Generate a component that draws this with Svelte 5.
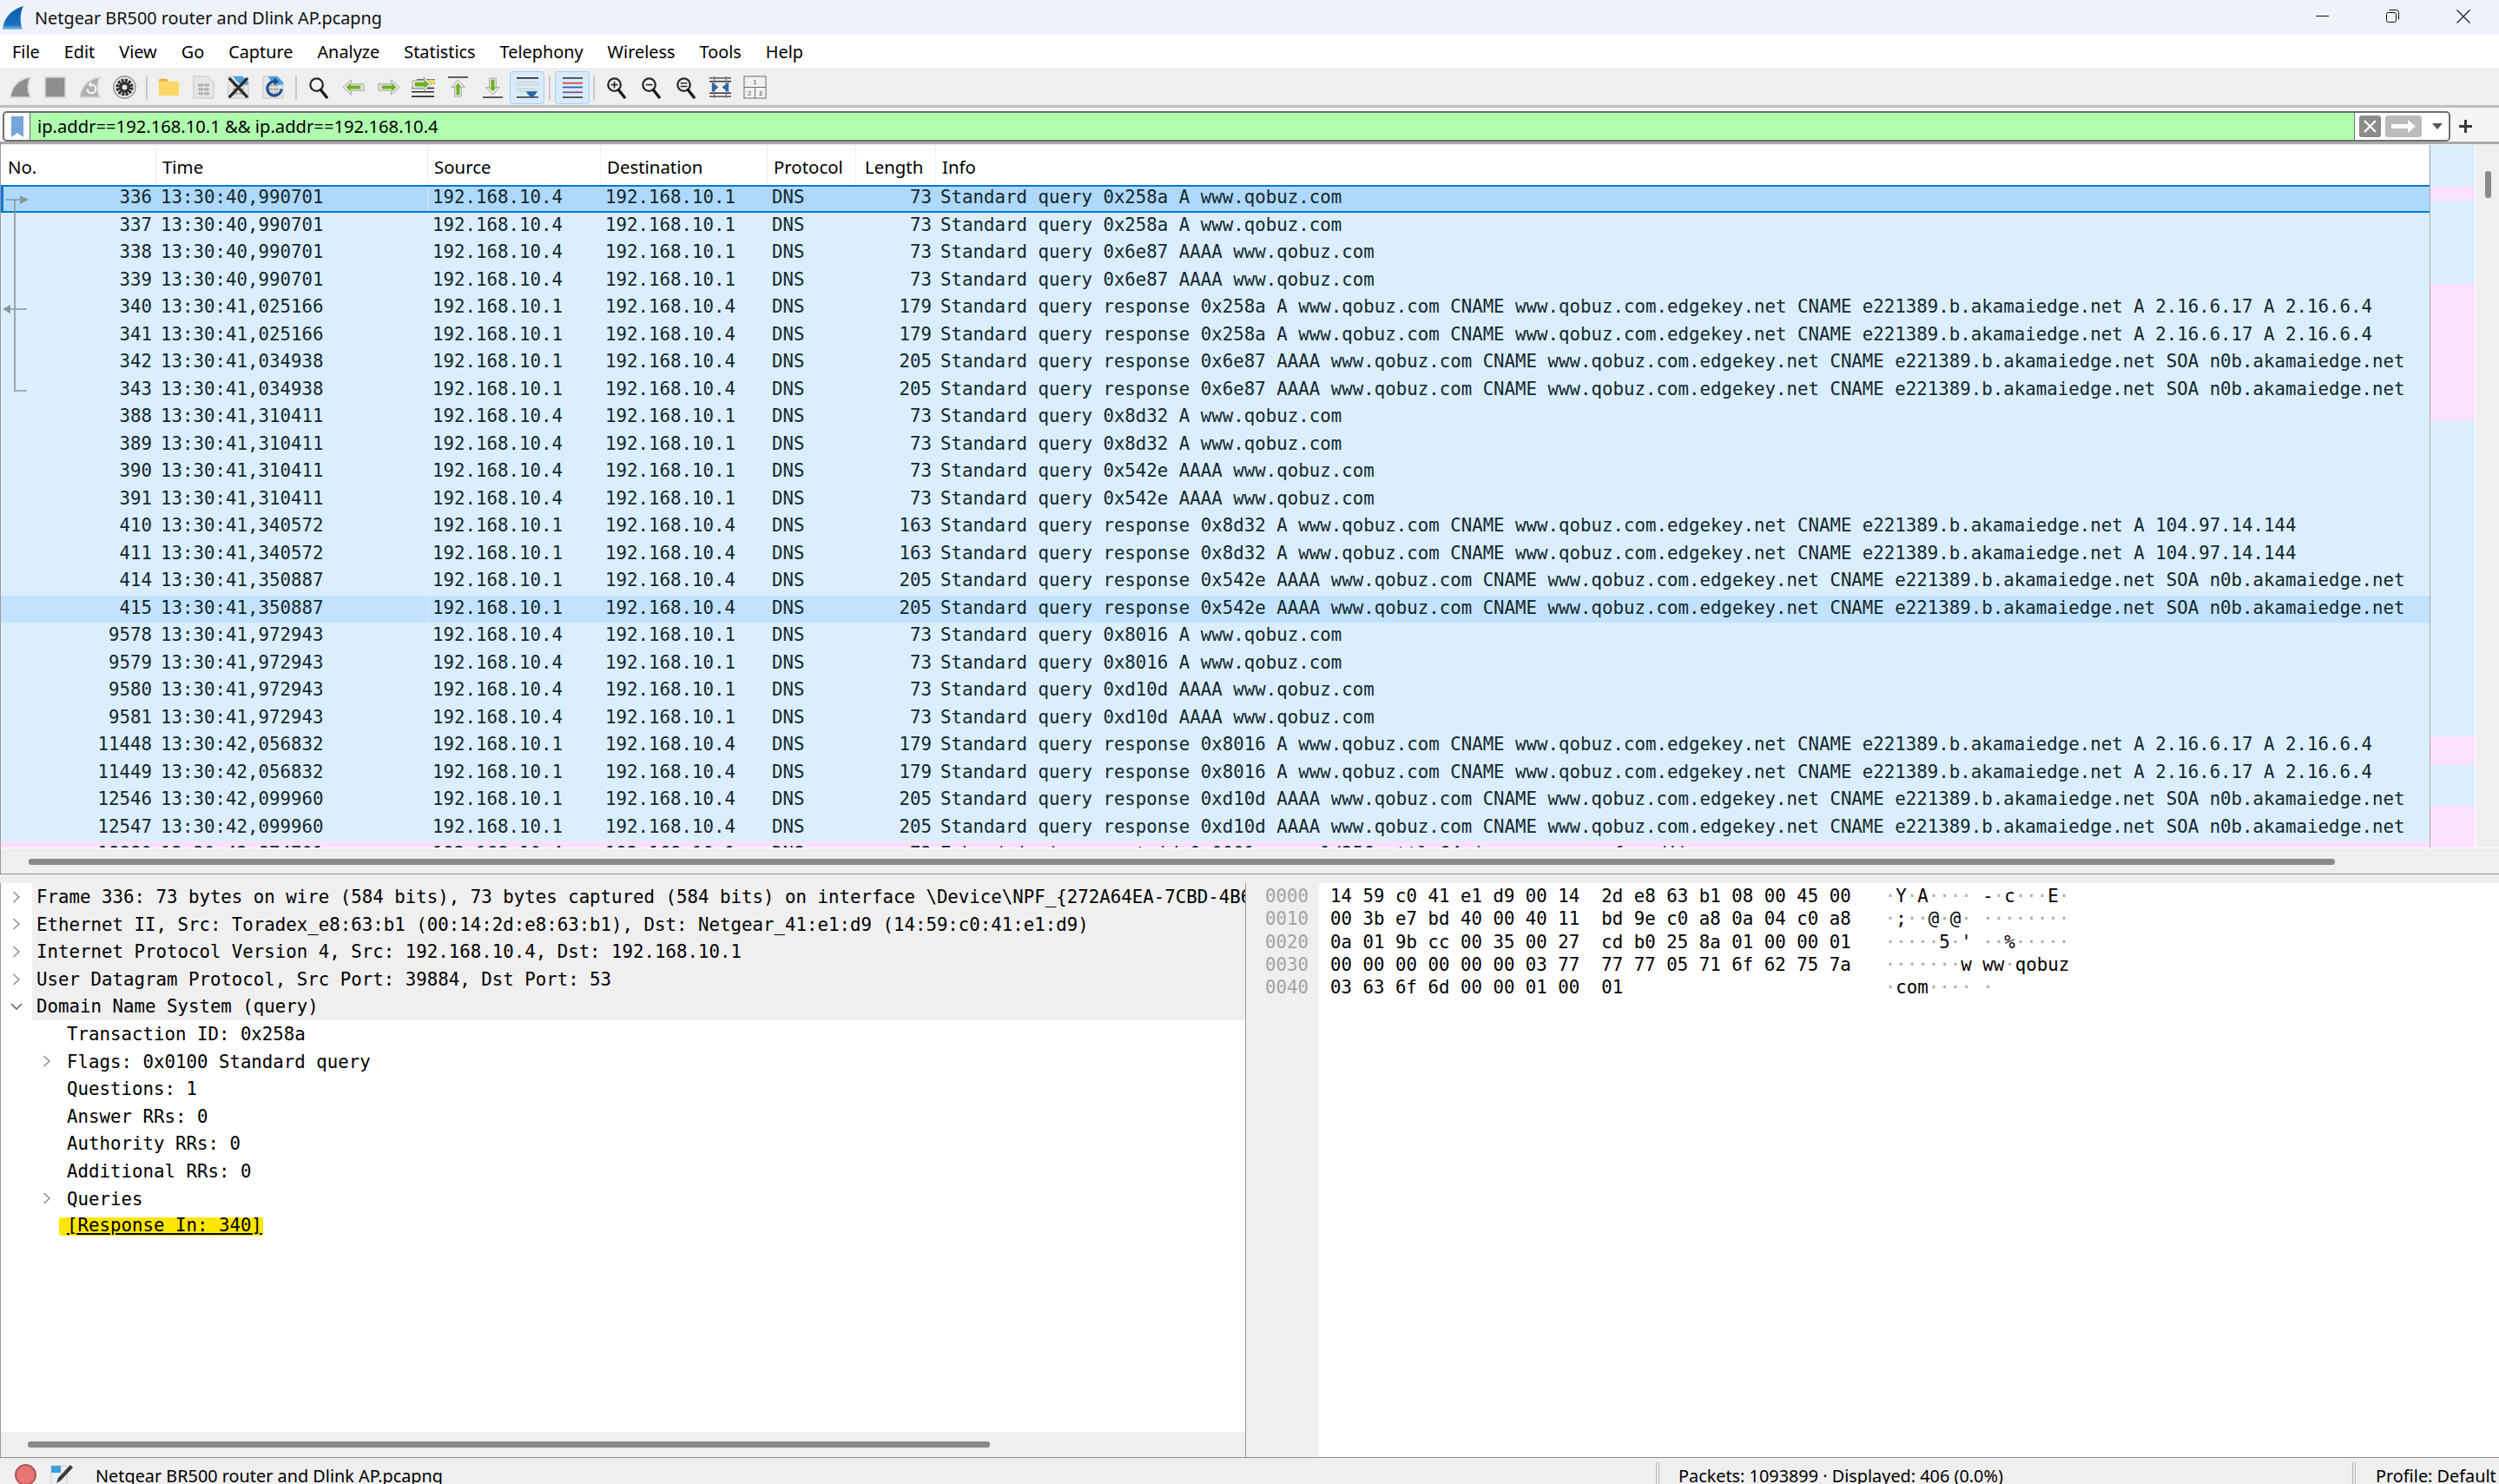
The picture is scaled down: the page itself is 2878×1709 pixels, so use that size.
<script lang="ts">
  const menus = ['File', 'Edit', 'View', 'Go', 'Capture', 'Analyze', 'Statistics', 'Telephony', 'Wireless', 'Tools', 'Help'];
  const columns = ['No.', 'Time', 'Source', 'Destination', 'Protocol', 'Length', 'Info'];

  const C = 'www.qobuz.com CNAME www.qobuz.com.edgekey.net CNAME e221389.b.akamaiedge.net';
  const query = (id: string, type: string) => `Standard query ${id} ${type} www.qobuz.com`;
  const resp = (id: string, type: string, tail: string) => `Standard query response ${id} ${type} ${C} ${tail}`;
  const A4 = 'A 2.16.6.17 A 2.16.6.4';
  const SOA = 'SOA n0b.akamaiedge.net';

  // no, time, sens (true = .4 -> .1), longueur, info
  const raw: [number, string, boolean, number, string][] = [
    [336, '40,990701', true, 73, query('0x258a', 'A')],
    [337, '40,990701', true, 73, query('0x258a', 'A')],
    [338, '40,990701', true, 73, query('0x6e87', 'AAAA')],
    [339, '40,990701', true, 73, query('0x6e87', 'AAAA')],
    [340, '41,025166', false, 179, resp('0x258a', 'A', A4)],
    [341, '41,025166', false, 179, resp('0x258a', 'A', A4)],
    [342, '41,034938', false, 205, resp('0x6e87', 'AAAA', SOA)],
    [343, '41,034938', false, 205, resp('0x6e87', 'AAAA', SOA)],
    [388, '41,310411', true, 73, query('0x8d32', 'A')],
    [389, '41,310411', true, 73, query('0x8d32', 'A')],
    [390, '41,310411', true, 73, query('0x542e', 'AAAA')],
    [391, '41,310411', true, 73, query('0x542e', 'AAAA')],
    [410, '41,340572', false, 163, resp('0x8d32', 'A', 'A 104.97.14.144')],
    [411, '41,340572', false, 163, resp('0x8d32', 'A', 'A 104.97.14.144')],
    [414, '41,350887', false, 205, resp('0x542e', 'AAAA', SOA)],
    [415, '41,350887', false, 205, resp('0x542e', 'AAAA', SOA)],
    [9578, '41,972943', true, 73, query('0x8016', 'A')],
    [9579, '41,972943', true, 73, query('0x8016', 'A')],
    [9580, '41,972943', true, 73, query('0xd10d', 'AAAA')],
    [9581, '41,972943', true, 73, query('0xd10d', 'AAAA')],
    [11448, '42,056832', false, 179, resp('0x8016', 'A', A4)],
    [11449, '42,056832', false, 179, resp('0x8016', 'A', A4)],
    [12546, '42,099960', false, 205, resp('0xd10d', 'AAAA', SOA)],
    [12547, '42,099960', false, 205, resp('0xd10d', 'AAAA', SOA)],
    [18880, '42,874701', true, 73, 'Echo (ping) request id=0x0001, seq=1/256, ttl=64 (no response found!)']
  ];

  const packets = raw.map(([no, time, out, len, info]) => ({
    no,
    time: `13:30:${time}`,
    src: out ? '192.168.10.4' : '192.168.10.1',
    dst: out ? '192.168.10.1' : '192.168.10.4',
    len,
    info
  }));

  // zones roses de la minimap (px depuis le haut de la liste)
  const minimapMarks = [
    { top: 48, height: 16 },
    { top: 160, height: 158 },
    { top: 681, height: 33 },
    { top: 761, height: 48 }
  ];

  const tree = [
    { text: 'Frame 336: 73 bytes on wire (584 bits), 73 bytes captured (584 bits) on interface \\Device\\NPF_{272A64EA-7CBD-4B6', level: 0, twisty: 'closed' },
    { text: 'Ethernet II, Src: Toradex_e8:63:b1 (00:14:2d:e8:63:b1), Dst: Netgear_41:e1:d9 (14:59:c0:41:e1:d9)', level: 0, twisty: 'closed' },
    { text: 'Internet Protocol Version 4, Src: 192.168.10.4, Dst: 192.168.10.1', level: 0, twisty: 'closed' },
    { text: 'User Datagram Protocol, Src Port: 39884, Dst Port: 53', level: 0, twisty: 'closed' },
    { text: 'Domain Name System (query)', level: 0, twisty: 'open' },
    { text: 'Transaction ID: 0x258a', level: 1, twisty: '' },
    { text: 'Flags: 0x0100 Standard query', level: 1, twisty: 'closed' },
    { text: 'Questions: 1', level: 1, twisty: '' },
    { text: 'Answer RRs: 0', level: 1, twisty: '' },
    { text: 'Authority RRs: 0', level: 1, twisty: '' },
    { text: 'Additional RRs: 0', level: 1, twisty: '' },
    { text: 'Queries', level: 1, twisty: 'closed' }
  ];

  const bytes = '14 59 c0 41 e1 d9 00 14 2d e8 63 b1 08 00 45 00 00 3b e7 bd 40 00 40 11 bd 9e c0 a8 0a 04 c0 a8 0a 01 9b cc 00 35 00 27 cd b0 25 8a 01 00 00 01 00 00 00 00 00 00 03 77 77 77 05 71 6f 62 75 7a 03 63 6f 6d 00 00 01 00 01'.split(' ');

  const hexRows = [];
  for (let i = 0; i < bytes.length; i += 16) {
    const line = bytes.slice(i, i + 16);
    const left = line.slice(0, 8).join(' ');
    const right = line.slice(8).join(' ');
    const chars = line.map((b) => {
      const code = parseInt(b, 16);
      return code >= 32 && code < 127 ? String.fromCharCode(code) : '·';
    });
    hexRows.push({
      offset: i.toString(16).padStart(4, '0'),
      hex: `${left}  ${right}`.padEnd(48, ' '),
      ascii: [...chars.slice(0, 8), ' ', ...chars.slice(8)]
    });
  }
</script>

{#snippet fin(fill)}
  <path d="M2 26C3 15 11 4 26 2c-4 8-4 16 0 24z" fill={fill} stroke="#d8d8d8" stroke-width="1.5" />
{/snippet}

{#snippet filePage(corner)}
  <path d="M2 1h17l7 7v19H2z" fill="#e6e6e6" stroke="#c4c4c4" />
  {#if corner}<path d="M8 1h11l7 7v3c-8 1-14-2-18-10z" fill={corner} />{/if}
  {#each [10, 15, 20] as y}
    {#each [8, 10, 12, 15, 17, 19] as x}
      <rect x={x} y={y} width="1.2" height="3" fill="#8c8c8c" />
    {/each}
  {/each}
{/snippet}

{#snippet lens(mark)}
  <circle cx="11" cy="10" r="7.5" fill="#f2f2f2" stroke="#2a2a2a" stroke-width="2.4" />
  <path d="M16 16l7 9" stroke="#1a1a1a" stroke-width="3.4" stroke-linecap="round" />
  {#if mark === 'plus'}<path d="M7 10h8M11 6v8" stroke="#222" stroke-width="1.6" />{/if}
  {#if mark === 'minus'}<path d="M7 10h8" stroke="#222" stroke-width="1.6" />{/if}
  {#if mark === 'equal'}<path d="M7 8h8M7 12h8" stroke="#222" stroke-width="1.6" />{/if}
{/snippet}

<div class="window">
  <header class="titlebar">
    <svg class="logo" viewBox="0 0 26 26" width="27" height="27">
      <defs>
        <linearGradient id="finfill" x1="0" y1="0" x2="0" y2="1">
          <stop offset="0" stop-color="#0f5ca8" />
          <stop offset="0.8" stop-color="#1a6fc0" />
          <stop offset="1" stop-color="#8fc0ea" />
        </linearGradient>
      </defs>
      <path d="M1 26C2 14 10 4 24 0c-4 8-4 18-1 26z" fill="url(#finfill)" />
    </svg>
    <span class="title">Netgear BR500 router and Dlink AP.pcapng</span>
    <div class="winctl">
      <svg viewBox="0 0 16 16" width="16" height="16"><path d="M0 7.5h15" stroke="#111" stroke-width="1" /></svg>
      <svg viewBox="0 0 16 16" width="16" height="16"><rect x="0.5" y="3.5" width="11" height="11" rx="2" fill="none" stroke="#111" /><path d="M3.5 0.5h8a3 3 0 0 1 3 3v8" fill="none" stroke="#111" /></svg>
      <svg viewBox="0 0 16 16" width="16" height="16"><path d="M0.5 0.5l15 15M15.5 0.5l-15 15" stroke="#111" stroke-width="1.1" /></svg>
    </div>
  </header>

  <nav class="menubar">
    {#each menus as m}<span>{m}</span>{/each}
  </nav>

  <div class="toolbar">
    <button class="tool"><svg viewBox="0 0 28 28">{@render fin('#8f8f8f')}</svg></button>
    <button class="tool"><svg viewBox="0 0 28 28"><rect x="2" y="2" width="24" height="24" fill="#8f8f8f" stroke="#d8d8d8" stroke-width="1.5" /></svg></button>
    <button class="tool"><svg viewBox="0 0 28 28">{@render fin('#b0b0b0')}<path d="M11 16a5 5 0 1 0 5-5" fill="none" stroke="#f4f4f4" stroke-width="2.4" /><path d="M16 7v7l-4-3z" fill="#f4f4f4" /></svg></button>
    <button class="tool"><svg viewBox="0 0 28 28"><circle cx="14" cy="14" r="13" fill="#f2f2f2" stroke="#8a8a8a" stroke-width="1.4" /><circle cx="14" cy="14" r="8" fill="#f2f2f2" stroke="#333" stroke-width="5" stroke-dasharray="3 1.2" /><circle cx="14" cy="14" r="6.5" fill="#333" /><circle cx="14" cy="14" r="3" fill="#e8e8e8" /></svg></button>
    <i class="sep"></i>
    <button class="tool"><svg viewBox="0 0 28 28"><path d="M2 6a2 2 0 0 1 2-2h7l3 3h-12z" fill="#f0a92e" /><rect x="2" y="7" width="24" height="17" rx="1.5" fill="#fdd766" /></svg></button>
    <button class="tool"><svg viewBox="0 0 28 28">{@render filePage('')}</svg></button>
    <button class="tool"><svg viewBox="0 0 28 28">{@render filePage('#4aa3df')}<path d="M3 3l22 23M25 3L3 26" stroke="#2b2b2b" stroke-width="3.4" /></svg></button>
    <button class="tool"><svg viewBox="0 0 28 28">{@render filePage('#4aa3df')}<path d="M16 7a8.5 8.5 0 1 0 8 9" fill="none" stroke="#1d4f8f" stroke-width="3.2" /><path d="M15 2v10l6-5z" fill="#1d4f8f" /></svg></button>
    <i class="sep s2"></i>
    <button class="tool"><svg viewBox="0 0 28 28"><g transform="translate(0 1)">{@render lens('')}</g></svg></button>
    <button class="tool"><svg viewBox="0 0 28 28"><path d="M1 14l10-9v5h15v8H11v5z" fill="#dfe5dc" stroke="#a8a8a8" /><path d="M5 14l5-5v3h12v4H10v3z" fill="#6cb11e" /></svg></button>
    <button class="tool"><svg viewBox="0 0 28 28"><path d="M27 14l-10-9v5H2v8h15v5z" fill="#dfe5dc" stroke="#a8a8a8" /><path d="M23 14l-5-5v3H6v4h12v3z" fill="#6cb11e" /></svg></button>
    <button class="tool"><svg viewBox="0 0 28 28"><path d="M6 5h22M6 9h22" stroke="#2c2c2c" stroke-width="1" /><rect x="20" y="5" width="7" height="5" fill="#f8dc55" /><path d="M0 15h27M0 19.5h27M0 25h27" stroke="#2c2c2c" stroke-width="1.6" /><path d="M24 10l-9-8v4H1v9h14v3z" fill="#e4e8e0" stroke="#a8a8a8" /><path d="M21 10l-6-5v3H4v5h11v2z" fill="#6cb11e" /></svg></button>
    <button class="tool"><svg viewBox="0 0 28 28"><path d="M2 2h24" stroke="#333" stroke-width="1.6" /><path d="M14 5l8 9h-4v11h-8V14H6z" fill="#e2e8dc" stroke="#a8a8a8" /><path d="M14 9l4 5h-2v9h-4v-9h-2z" fill="#6cb11e" /></svg></button>
    <button class="tool"><svg viewBox="0 0 28 28"><path d="M2 26h24" stroke="#333" stroke-width="1.6" /><path d="M14 23l8-9h-4V3h-8v11H6z" fill="#e2e8dc" stroke="#a8a8a8" /><path d="M14 19l4-5h-2V5h-4v9h-2z" fill="#6cb11e" /></svg></button>
    <button class="tool on"><svg viewBox="0 0 28 28"><path d="M1 3h26M1 26h26" stroke="#333" stroke-width="1.6" /><path d="M1 8h26M1 11h26M1 16h26M1 19h26" stroke="#cfd2c8" stroke-width="1.4" /><path d="M12 19h14l-3 4h-1v2h-6v-2h-1z" fill="#2a64ad" /></svg></button>
    <i class="sep s3"></i>
    <button class="tool on"><svg viewBox="0 0 28 28"><path d="M2 3h24" stroke="#333" stroke-width="1.6" /><path d="M2 9h24" stroke="#e23b3b" stroke-width="1.8" /><path d="M2 14h24" stroke="#2d62b3" stroke-width="1.8" /><path d="M2 20h24" stroke="#7d4f86" stroke-width="1.8" /><path d="M2 26h24" stroke="#333" stroke-width="1.6" /></svg></button>
    <i class="sep s4"></i>
    <button class="tool"><svg viewBox="0 0 28 28"><g transform="translate(1 1)">{@render lens('plus')}</g></svg></button>
    <button class="tool"><svg viewBox="0 0 28 28"><g transform="translate(1 1)">{@render lens('minus')}</g></svg></button>
    <button class="tool"><svg viewBox="0 0 28 28"><g transform="translate(1 1)">{@render lens('equal')}</g></svg></button>
    <button class="tool"><svg viewBox="0 0 28 28"><path d="M1 3h26M1 7h26M1 21h26M1 25h26" stroke="#333" stroke-width="1.4" /><path d="M7 1v26M21 1v26" stroke="#777" stroke-width="1.4" /><path d="M4 8l8 6-8 6zM24 8l-8 6 8 6z" fill="#2a64ad" /></svg></button>
    <button class="tool"><svg viewBox="0 0 28 28"><rect x="1" y="1" width="26" height="26" fill="#f2f2f2" stroke="#666" /><path d="M1 14h26M14 14v13" stroke="#666" /><text x="14" y="10" class="pane-no">1</text><text x="7.5" y="23.5" class="pane-no">2</text><text x="20.5" y="23.5" class="pane-no">3</text></svg></button>
  </div>

  <div class="filterbar">
    <div class="filter">
      <span class="bookmark">
        <svg viewBox="0 0 14 24" width="14" height="24"><path d="M0 0h14v24l-7-5-7 5z" fill="#76a5dc" /></svg>
      </span>
      <span class="expr">ip.addr==192.168.10.1 &amp;&amp; ip.addr==192.168.10.4</span>
      <span class="filter-tail">
        <span class="fbtn clear">
          <svg viewBox="0 0 25 25" width="25" height="25"><path d="M6 6l13 13M19 6L6 19" stroke="#fff" stroke-width="2.2" /></svg>
        </span>
        <span class="fbtn apply">
          <svg viewBox="0 0 42 25" width="42" height="25"><path d="M7 10h19V5l9 7.5-9 7.5v-5H7z" fill="#fff" /></svg>
        </span>
        <span class="caret"></span>
      </span>
    </div>
    <svg class="plus" viewBox="0 0 15 15" width="15" height="15"><path d="M7.5 0v15M0 7.5h15" stroke="#3a3a3a" stroke-width="3" /></svg>
  </div>

  <section class="packet-pane">
    <div class="packet-main">
      <div class="cols head">
        {#each columns as c}<span>{c}</span>{/each}
      </div>
      <div class="rows">
        {#each packets as p, i}
          <div class="cols row" class:sel={i === 0} class:hover={p.no === 415} class:icmp={p.no === 18880}>
            <span class="num">{p.no}</span>
            <span class="time">{p.time}</span>
            <span>{p.src}</span>
            <span>{p.dst}</span>
            <span>DNS</span>
            <span class="num">{p.len}</span>
            <span>{p.info}</span>
          </div>
        {/each}
        <svg class="related" width="40" height="240">
          <path d="M5 17h18M16 17v220h14M30 143H10" fill="none" stroke="#8b969b" stroke-width="1.6" />
          <path d="M22 12l10 5-10 5zM11 138l-9 5 9 5z" fill="#8b969b" />
        </svg>
      </div>
    </div>
    <div class="minimap">
      {#each minimapMarks as m}
        <i style="top: {m.top}px; height: {m.height}px"></i>
      {/each}
    </div>
    <div class="vscroll"><i></i></div>
  </section>
  <div class="hscroll list-h"><i></i></div>

  <section class="lower">
    <div class="details">
      <div class="tree">
        {#each tree as n}
          <div class="tree-row" class:group={n.level === 0}>
            <span class="twisty" class:deep={n.level === 1}>
              {#if n.twisty === 'closed'}
                <svg viewBox="0 0 10 14" width="10" height="14"><path d="M1.5 1l6.5 6-6.5 6" fill="none" stroke="#8a8a8a" stroke-width="1.4" /></svg>
              {:else if n.twisty === 'open'}
                <svg viewBox="0 0 14 8" width="14" height="8"><path d="M1 1l6 6 6-6" fill="none" stroke="#555" stroke-width="1.4" /></svg>
              {/if}
            </span>
            <span class="node">{n.text}</span>
          </div>
        {/each}
        <div class="tree-row">
          <span class="twisty deep"></span>
          <span class="node"><mark>[Response In: 340]</mark></span>
        </div>
      </div>
      <div class="hscroll detail-h"><i></i></div>
    </div>
    <div class="bytes">
      <div class="gutter">
        {#each hexRows as r}<div class="hexline">{r.offset}</div>{/each}
      </div>
      <div class="dump">
        {#each hexRows as r}
          <div class="hexline"><span>{r.hex}</span><span class="ascii">{#each r.ascii as ch}<span class:dot={ch === '·'}>{ch}</span>{/each}</span></div>
        {/each}
      </div>
    </div>
  </section>

  <footer class="statusbar">
    <span class="status-main">
      <span class="led"></span>
      <svg class="note" viewBox="0 0 26 30" width="26" height="30">
        <path d="M1 2h18v26H1z" fill="#e8eef2" stroke="#c8ccd0" />
        <rect x="1" y="2" width="11" height="8" fill="#3aa0e0" />
        <path d="M23 1l3 3-14 15-5 3 2-6z" fill="#3a3a3a" />
      </svg>
      <span class="capture">Netgear BR500 router and Dlink AP.pcapng</span>
    </span>
    <i class="grip"></i>
    <span class="status-packets">Packets: 1093899 · Displayed: 406 (0.0%)</span>
    <i class="grip"></i>
    <span class="status-profile">Profile: Default</span>
  </footer>
</div>

<style>
  :global(body) {
    margin: 0;
    background: #efefef;
  }

  .window {
    width: 2878px;
    height: 1709px;
    display: flex;
    flex-direction: column;
    overflow: hidden;
    background: #efefef;
    color: #000;
    font-family: 'Noto Sans', sans-serif;
    font-size: 19.85px;
  }

  /* barre de titre */
  .titlebar {
    height: 40px;
    flex: none;
    display: flex;
    align-items: center;
    background: #eef3fa;
    padding-left: 2px;
  }
  .logo {
    margin-right: 11px;
  }
  .title {
    color: #111;
  }
  .winctl {
    margin-left: auto;
    display: flex;
    gap: 65px;
    padding-right: 33px;
    padding-bottom: 2px;
  }

  .menubar {
    height: 38px;
    flex: none;
    display: flex;
    align-items: center;
    gap: 28px;
    padding-left: 14px;
    background: #fff;
  }

  .toolbar {
    height: 41px;
    flex: none;
    display: flex;
    align-items: center;
    padding: 2px 0 0 3px;
    border-bottom: 3px solid #bfbfbf;
    background: #efefef;
  }
  .tool {
    width: 40px;
    height: 38px;
    padding: 0;
    border: 1px solid transparent;
    border-radius: 4px;
    background: none;
    display: flex;
    align-items: center;
    justify-content: center;
    box-sizing: border-box;
  }
  .tool svg {
    width: 27px;
    height: 27px;
  }
  .tool.on {
    background: #d9ebfb;
    border-color: #9fd0f7;
  }
  .sep {
    width: 11px;
    height: 28px;
    flex: none;
    background: linear-gradient(#c9c9c9, #c9c9c9) center / 2px 100% no-repeat;
  }
  .sep.s2 {
    width: 13px;
  }
  .sep.s3 {
    width: 12px;
  }
  .sep.s4 {
    width: 10px;
  }
  .pane-no {
    font-size: 7px;
    fill: #333;
    text-anchor: middle;
  }

  /* filtre d'affichage */
  .filterbar {
    height: 39px;
    flex: none;
    display: flex;
    align-items: flex-start;
    padding: 4px 0 0 3px;
    box-sizing: border-box;
    background: #f5f5f5;
  }
  .filter {
    width: 2819px;
    height: 35px;
    box-sizing: border-box;
    display: flex;
    border: 2px solid #6f6f6f;
    border-radius: 5px;
    overflow: hidden;
    background: #fff;
  }
  .bookmark {
    width: 30px;
    flex: none;
    display: flex;
    align-items: center;
    justify-content: center;
    border-right: 1px solid #6f6f6f;
    box-sizing: border-box;
  }
  .expr {
    flex: 1;
    background: #afffaf;
    padding-left: 8px;
    line-height: 31px;
    font-size: 20.2px;
  }
  .filter-tail {
    width: 109px;
    flex: none;
    display: flex;
    align-items: center;
    gap: 5px;
    padding-left: 5px;
    box-sizing: border-box;
    border-left: 1px solid #6f6f6f;
  }
  .fbtn {
    height: 25px;
    display: flex;
    border-radius: 3px;
  }
  .clear {
    background: #8b8d89;
  }
  .apply {
    background: #bbb;
  }
  .caret {
    width: 0;
    height: 0;
    margin-left: 7px;
    border: 6px solid transparent;
    border-top: 7px solid #555;
    border-bottom: 0;
  }
  .plus {
    margin: 10px 0 0 10px;
  }

  /* liste des paquets */
  .packet-pane {
    height: 813px;
    flex: none;
    display: flex;
    box-sizing: border-box;
    border-top: 3px solid #a9a9a9;
    border-left: 1px solid #9a9a9a;
    padding-top: 1px;
    background: #efefef;
  }
  .packet-main {
    width: 2797px;
    flex: none;
    display: flex;
    flex-direction: column;
    background: #fff;
    border-right: 1px solid #a8a8a8;
  }
  .cols {
    display: grid;
    grid-template-columns: 179px 313px 199px 192px 102px 92px 1fr;
    white-space: pre;
  }
  .head {
    height: 46px;
    flex: none;
    align-items: stretch;
    background: #fff;
    font-size: 20.4px;
  }
  .head span {
    padding-left: 7px;
    line-height: 50px;
    border-right: 1px solid #ececec;
  }
  .head span:first-child {
    padding-left: 8px;
  }
  .head span:nth-child(6) {
    padding-left: 10px;
  }
  .rows {
    position: relative;
    flex: 1;
    overflow: hidden;
    font-family: 'DejaVu Sans Mono', monospace;
    font-size: 20.76px;
    color: #12272e;
    background: #daeeff;
  }
  .row {
    height: 31.5px;
    line-height: 29px;
    box-sizing: border-box;
  }
  .row span {
    padding-left: 5px;
    overflow: hidden;
  }
  .row .num {
    padding: 0 5px 0 0;
    text-align: right;
  }
  .row.sel {
    background: #aed8fc;
    border-top: 2px solid #0078d7;
    border-bottom: 2px solid #0078d7;
    line-height: 25px;
    box-shadow: inset 3px 0 0 #0078d7;
  }
  .row.hover {
    background: #c2e2ff;
  }
  .row.sel .time,
  .row.hover .time {
    border-right: 1px solid #d6ebfd;
  }
  .row.icmp {
    background: #fce0ff;
  }
  .related {
    position: absolute;
    left: 0;
    top: 0;
  }

  .minimap {
    position: relative;
    width: 51px;
    flex: none;
    background: #daeeff;
    border-right: 1px solid #fff;
  }
  .minimap i {
    position: absolute;
    left: 0;
    right: 0;
    background: #fce0ff;
  }
  .vscroll {
    flex: 1;
    background: #efefef;
    padding: 30px 0 0 11px;
  }
  .vscroll i {
    display: block;
    width: 7px;
    height: 31px;
    border-radius: 3px;
    background: #8a8a8a;
  }

  .hscroll {
    flex: none;
    box-sizing: border-box;
    background: #efefef;
  }
  .hscroll i {
    display: block;
    height: 7px;
    border-radius: 3px;
    background: #8a8a8a;
  }
  .list-h {
    height: 31px;
    padding: 12px 0 0 32px;
    border-bottom: 1px solid #8d8d8d;
    border-left: 1px solid #9a9a9a;
    border-top: 1px solid #fff;
  }
  .list-h i {
    width: 2656px;
  }

  /* volets du bas */
  .lower {
    height: 661px;
    flex: none;
    margin-top: 10px;
    display: flex;
    border-bottom: 1px solid #8a8a9a;
  }
  .details {
    width: 1435px;
    flex: none;
    display: flex;
    flex-direction: column;
    box-sizing: border-box;
    border-left: 1px solid #9a9a9a;
    border-right: 1px solid #9a9a9a;
    background: #fff;
  }
  .tree {
    flex: 1;
    overflow: hidden;
    font-family: 'DejaVu Sans Mono', monospace;
    font-size: 20.76px;
  }
  .tree-row {
    height: 31.6px;
    line-height: 33px;
    display: flex;
    white-space: pre;
  }
  .twisty {
    width: 36px;
    flex: none;
    display: flex;
    align-items: center;
    justify-content: center;
  }
  .twisty.deep {
    margin-left: 35px;
  }
  .node {
    flex: 1;
    overflow: hidden;
    padding-left: 5px;
  }
  .group .node {
    background: #efefef;
  }
  mark {
    display: inline-block;
    background: #ffe600;
    height: 21px;
    line-height: 19px;
    margin-left: -9px;
    padding: 0 1px 0 9px;
    border-radius: 2px;
    margin-top: 6px;
    vertical-align: top;
    text-decoration: underline;
    color: #000;
  }
  .node:has(mark) {
    overflow: visible;
  }
  .detail-h {
    height: 29px;
    padding: 11px 0 0 31px;
  }
  .detail-h i {
    width: 1108px;
  }

  .bytes {
    flex: 1;
    margin-left: 9px;
    display: flex;
    background: #fff;
    font-family: 'DejaVu Sans Mono', monospace;
    font-size: 20.76px;
  }
  .gutter {
    width: 75px;
    flex: none;
    box-sizing: border-box;
    padding: 2px 0 0 13px;
    background: #efefef;
    color: #a3a3a3;
  }
  .dump {
    padding: 2px 0 0 13px;
  }
  .hexline {
    height: 26.3px;
    line-height: 26px;
    white-space: pre;
  }
  .ascii {
    margin-left: 39px;
  }
  .dot {
    color: #a8a8a8;
  }

  /* barre d'état */
  .statusbar {
    height: 30px;
    flex: none;
    display: flex;
    background: #efefef;
    line-height: 42px;
    overflow: hidden;
    white-space: nowrap;
  }
  .status-main {
    width: 1907px;
    flex: none;
    display: flex;
    align-items: flex-start;
  }
  .led {
    width: 25px;
    height: 25px;
    box-sizing: border-box;
    margin: 7px 0 0 17px;
    border-radius: 50%;
    border: 2px solid #a85a5a;
    background: #e87474;
    flex: none;
  }
  .note {
    margin: 7px 0 0 16px;
    flex: none;
  }
  .capture {
    margin-left: 26px;
  }
  .grip {
    width: 4px;
    flex: none;
    margin-top: 5px;
    box-sizing: border-box;
    border-left: 1px solid #b5b5b5;
    border-right: 1px solid #b5b5b5;
  }
  .status-packets {
    width: 798px;
    flex: none;
    box-sizing: border-box;
    padding-left: 22px;
  }
  .status-profile {
    padding-left: 23px;
  }
</style>
